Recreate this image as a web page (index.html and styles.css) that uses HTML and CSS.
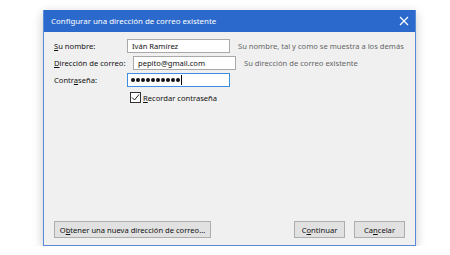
FILE: index.html
```html
<!DOCTYPE html>
<html lang="es">
<head>
  <meta charset="UTF-8">
  <title>Configurar una dirección de correo existente</title>
  <link rel="stylesheet" href="styles.css">
</head>
<body>
  <div class="dialog">
    <div class="titlebar">
      <span class="title">Configurar una dirección de correo existente</span>
      <svg class="close" width="10" height="10" viewBox="0 0 10 10">
        <path d="M1 1 L9 9 M9 1 L1 9" stroke="#fff" stroke-width="1.2" fill="none"/>
      </svg>
    </div>
    <div class="content">
      <div class="row">
        <label class="label"><u>S</u>u nombre:</label>
        <input class="field" type="text" value="Iván Ramírez">
        <span class="hint">Su nombre, tal y como se muestra a los demás</span>
      </div>
      <div class="row">
        <label class="label wide"><u>D</u>irección de correo:</label>
        <input class="field" type="text" value="pepito@gmail.com">
        <span class="hint">Su dirección de correo existente</span>
      </div>
      <div class="row">
        <label class="label">Contr<u>a</u>seña:</label>
        <div class="field focused">
          <span class="dot"></span><span class="dot"></span><span class="dot"></span><span class="dot"></span><span class="dot"></span>
          <span class="dot"></span><span class="dot"></span><span class="dot"></span><span class="dot"></span><span class="dot"></span>
          <span class="caret"></span>
        </div>
      </div>
      <div class="check-row">
        <span class="checkbox">
          <svg width="9" height="9" viewBox="0 0 9 9"><path d="M1 4.5 L3.5 7 L8 1.5" stroke="#222" stroke-width="1" fill="none"/></svg>
        </span>
        <span><u>R</u>ecordar contraseña</span>
      </div>
      <div class="spacer"></div>
      <div class="buttons">
        <button class="btn btn-wide">O<u>b</u>tener una nueva dirección de correo...</button>
        <div class="right">
          <button class="btn btn-small">C<u>o</u>ntinuar</button>
          <button class="btn btn-small">Ca<u>n</u>celar</button>
        </div>
      </div>
    </div>
  </div>
</body>
</html>
```

FILE: styles.css
```css
body {
  margin: 0;
  padding: 10px 0 0 43px;
  background: #fff;
  font-family: 'Noto Sans', sans-serif;
  font-size: 7.6px;
  color: #111;
}

.dialog {
  width: 371px;
  height: 235px;
  border: 1px solid #5b8ad8;
  border-top: none;
  background: #f0f0f0;
  box-shadow: 0 3px 10px rgba(0, 0, 0, 0.22);
  display: flex;
  flex-direction: column;
}

.titlebar {
  height: 22px;
  background: #2b69cd;
  color: #fff;
  display: flex;
  align-items: center;
  justify-content: space-between;
  padding: 0 6px 0 7px;
  font-size: 7.9px;
}

.content {
  flex: 1;
  display: flex;
  flex-direction: column;
  padding: 7px 10px 7px 10px;
}

.row {
  display: flex;
  align-items: center;
  height: 14px;
  margin-bottom: 3px;
}

.label {
  min-width: 67px;
  margin-right: 6px;
  white-space: nowrap;
}

.wide {
  min-width: 73px;
}

.field {
  box-sizing: border-box;
  width: 103px;
  height: 14px;
  border: 1px solid #a9a9a9;
  background: #fff;
  font-family: 'Noto Sans', sans-serif;
  font-size: 7.6px;
  color: #111;
  padding: 0 4px;
  margin: 0 8px 0 0;
  outline: none;
}

.focused {
  border-color: #3c8fe0;
  display: flex;
  align-items: center;
  gap: 1px;
  padding-left: 3px;
}

.dot {
  width: 4px;
  height: 4px;
  border-radius: 50%;
  background: #111;
}

.caret {
  width: 1px;
  height: 10px;
  background: #000;
}

.hint {
  color: #666;
  white-space: nowrap;
}

.check-row {
  display: flex;
  align-items: center;
  margin: 2px 0 0 76px;
}

.checkbox {
  box-sizing: border-box;
  width: 11px;
  height: 11px;
  border: 1px solid #333;
  background: #fff;
  display: flex;
  align-items: center;
  justify-content: center;
  margin-right: 2px;
}

.spacer {
  flex: 1;
}

.buttons {
  display: flex;
  justify-content: space-between;
}

.right {
  display: flex;
  gap: 9px;
}

.btn {
  height: 17px;
  border: 1px solid #adadad;
  background: #e1e1e1;
  font-family: 'Noto Sans', sans-serif;
  font-size: 7.6px;
  color: #111;
  padding: 0 4px;
}

.btn-wide {
  width: 157px;
}

.btn-small {
  width: 51px;
}
```
